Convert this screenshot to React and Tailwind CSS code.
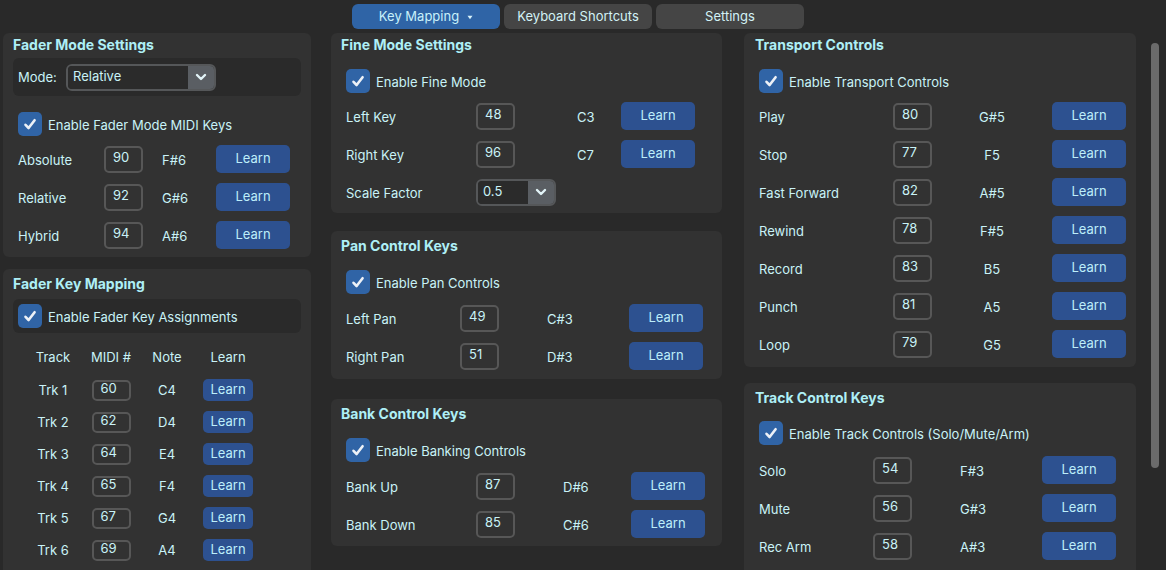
import React from "react";

const FONT = { fontFamily: "Inter, 'Noto Sans', sans-serif" };

function Check() {
  return (
    <span className="w-6 h-6 shrink-0 rounded-[5px] bg-[#3064a6] flex items-center justify-center">
      <svg width="16" height="16" viewBox="0 0 16 16">
        <path d="M3.5 8.8 L6.6 12 L12.6 4.2" stroke="#edf1f7" strokeWidth="2.6" fill="none" strokeLinecap="round" strokeLinejoin="round" />
      </svg>
    </span>
  );
}

function CheckRow({ text, className }) {
  return (
    <div className={"flex items-center gap-[6px] " + className}>
      <Check />
      <span className="text-[13px] text-[#c9f2f7] pt-[4px]">{text}</span>
    </div>
  );
}

function Input({ v }) {
  return (
    <div className="w-[39px] h-[27px] border-2 border-[#575757] rounded-[5px] pl-[7px] flex items-center text-[13px] text-[#c9f2f7] pb-[2px]">
      {v}
    </div>
  );
}

function Learn() {
  return (
    <div className="w-[74px] h-[28px] rounded-[5px] bg-[#2d5190] flex items-center justify-center text-[13px] text-[#bdeefa]">
      Learn
    </div>
  );
}

function Chevron() {
  return (
    <svg width="14" height="14" viewBox="0 0 14 14">
      <path d="M3 5 L7 9 L11 5" stroke="#e2f4f8" strokeWidth="2.4" fill="none" strokeLinecap="round" strokeLinejoin="round" />
    </svg>
  );
}

function Select({ value, w }) {
  return (
    <div className={"h-[27px] border-2 border-[#555759] rounded-[6px] flex overflow-hidden " + w}>
      <div className="flex-1 bg-[#2b2b2b] pl-[5px] flex items-center text-[13px] text-[#c9f2f7]">{value}</div>
      <div className="w-[26px] bg-[#5a5e63] flex items-center justify-center">
        <Chevron />
      </div>
    </div>
  );
}

function Row({ cols, noteCls, label, value, note }) {
  return (
    <div className={"grid items-center h-[28px] " + cols}>
      <span className="text-[13px] text-[#c9f2f7] pt-[4px]">{label}</span>
      <Input v={value} />
      <span className={"text-[13px] text-[#c9f2f7] pt-[4px] " + noteCls}>{note}</span>
      <Learn />
    </div>
  );
}

function Title({ children, className }) {
  return (
    <div className={"h-[24px] flex items-center pb-[2px] text-[14px] font-bold text-[#aeeff6] " + className}>
      {children}
    </div>
  );
}

const panel = "bg-[#323232] rounded-[6px] flex flex-col";

export default function App() {
  const faderRows = [
    ["Absolute", "90", "F#6"],
    ["Relative", "92", "G#6"],
    ["Hybrid", "94", "A#6"],
  ];
  const trk = [
    ["Trk 1", "60", "C4"],
    ["Trk 2", "62", "D4"],
    ["Trk 3", "64", "E4"],
    ["Trk 4", "65", "F4"],
    ["Trk 5", "67", "G4"],
    ["Trk 6", "69", "A4"],
  ];
  const transport = [
    ["Play", "80", "G#5"],
    ["Stop", "77", "F5"],
    ["Fast Forward", "82", "A#5"],
    ["Rewind", "78", "F#5"],
    ["Record", "83", "B5"],
    ["Punch", "81", "A5"],
    ["Loop", "79", "G5"],
  ];
  const trackCtl = [
    ["Solo", "54", "F#3"],
    ["Mute", "56", "G#3"],
    ["Rec Arm", "58", "A#3"],
  ];

  return (
    <div style={FONT} className="w-[1166px] h-[570px] overflow-hidden bg-[#292929] pt-[4px] flex flex-col gap-[4px]">
      {/* Tabs */}
      <div className="flex gap-[4px] pl-[352px]">
        <div className="w-[148px] h-[25px] rounded-[6px] bg-[#2f64a6] flex items-center justify-center gap-[8px] text-[13px] text-[#c8f1fa]">
          <span>Key Mapping</span>
          <svg width="6" height="5" viewBox="0 0 6 5" className="mt-[2px]">
            <path d="M0.5 0.8 L5.5 0.8 L3 4.2 Z" fill="#d8f2fa" />
          </svg>
        </div>
        <div className="w-[148px] h-[25px] rounded-[6px] bg-[#454545] flex items-center justify-center text-[13px] text-[#d2f2f6]">
          Keyboard Shortcuts
        </div>
        <div className="w-[148px] h-[25px] rounded-[6px] bg-[#454545] flex items-center justify-center text-[13px] text-[#d2f2f6]">
          Settings
        </div>
      </div>

      {/* Content */}
      <div className="flex pl-[3px]">
        {/* Left column */}
        <div className="w-[308px] flex flex-col gap-[12px]">
          <div className={panel + " pb-[8px]"}>
            <Title className="pl-[10px]">Fader Mode Settings</Title>
            <div className="mx-[10px] mt-[1px] h-[38px] rounded-[6px] bg-[#2a2a2a] flex items-center pl-[5px]">
              <span className="w-[48px] text-[13px] text-[#c9f2f7] pt-[2px]">Mode:</span>
              <Select value="Relative" w="w-[150px]" />
            </div>
            <CheckRow text="Enable Fader Mode MIDI Keys" className="pl-[15px] mt-[16px]" />
            <div className="pl-[15px] mt-[9px] flex flex-col gap-[10px]">
              {faderRows.map(([l, v, n]) => (
                <Row key={l} cols="grid-cols-[86px_39px_73px_74px]" noteCls="pl-[19px]" label={l} value={v} note={n} />
              ))}
            </div>
          </div>

          <div className={panel + " pt-[3px] h-[320px]"}>
            <Title className="pl-[10px]">Fader Key Mapping</Title>
            <div className="mx-[10px] mt-[3px] h-[34px] rounded-[6px] bg-[#2a2a2a] flex items-center pl-[5px]">
              <CheckRow text="Enable Fader Key Assignments" className="" />
            </div>
            <div className="ml-[20px] mt-[15px] grid grid-cols-[60px_56px_56px_66px] h-[20px] items-center text-center text-[13px] text-[#c9f2f7]">
              <span>Track</span>
              <span>MIDI #</span>
              <span>Note</span>
              <span>Learn</span>
            </div>
            <div className="ml-[20px] mt-[10px] flex flex-col gap-[8px]">
              {trk.map(([l, v, n]) => (
                <div key={l} className="grid grid-cols-[60px_56px_56px_66px] h-[24px] items-center text-center text-[13px] text-[#c9f2f7]">
                  <span className="pt-[2px]">{l}</span>
                  <div className="flex justify-center">
                    <div className="w-[39px] h-[21px] border-2 border-[#575757] rounded-[5px] pl-[7px] flex items-center text-left pb-[2px]">{v}</div>
                  </div>
                  <span className="pt-[2px]">{n}</span>
                  <div className="flex justify-center">
                    <div className="w-[50px] h-[22px] rounded-[5px] bg-[#2d5190] flex items-center justify-center text-[#bdeefa]">Learn</div>
                  </div>
                </div>
              ))}
            </div>
          </div>
        </div>

        {/* Middle column */}
        <div className="w-[391px] ml-[20px] flex flex-col">
          <div className={panel + " pb-[7px]"}>
            <Title className="pl-[10px]">Fine Mode Settings</Title>
            <CheckRow text="Enable Fine Mode" className="pl-[15px] mt-[12px]" />
            <div className="pl-[15px] mt-[9px] flex flex-col gap-[10px]">
              <Row cols="grid-cols-[130px_39px_106px_74px]" noteCls="pl-[62px]" label="Left Key" value="48" note="C3" />
              <Row cols="grid-cols-[130px_39px_106px_74px]" noteCls="pl-[62px]" label="Right Key" value="96" note="C7" />
              <div className="flex items-center h-[28px]">
                <span className="w-[130px] text-[13px] text-[#c9f2f7] pt-[4px]">Scale Factor</span>
                <Select value="0.5" w="w-[80px]" />
              </div>
            </div>
          </div>

          <div className={panel + " mt-[18px] pt-[3px] pb-[9px]"}>
            <Title className="pl-[10px]">Pan Control Keys</Title>
            <CheckRow text="Enable Pan Controls" className="pl-[15px] mt-[12px]" />
            <div className="pl-[15px] mt-[10px] flex flex-col gap-[10px]">
              <Row cols="grid-cols-[114px_39px_130px_74px]" noteCls="pl-[48px]" label="Left Pan" value="49" note="C#3" />
              <Row cols="grid-cols-[114px_39px_130px_74px]" noteCls="pl-[48px]" label="Right Pan" value="51" note="D#3" />
            </div>
          </div>

          <div className={panel + " mt-[20px] pt-[3px] pb-[8px]"}>
            <Title className="pl-[10px]">Bank Control Keys</Title>
            <CheckRow text="Enable Banking Controls" className="pl-[15px] mt-[12px]" />
            <div className="pl-[15px] mt-[10px] flex flex-col gap-[10px]">
              <Row cols="grid-cols-[130px_39px_116px_74px]" noteCls="pl-[48px]" label="Bank Up" value="87" note="D#6" />
              <Row cols="grid-cols-[130px_39px_116px_74px]" noteCls="pl-[48px]" label="Bank Down" value="85" note="C#6" />
            </div>
          </div>
        </div>

        {/* Right column */}
        <div className="w-[392px] ml-[22px] flex flex-col">
          <div className={panel + " pb-[9px]"}>
            <Title className="pl-[11px]">Transport Controls</Title>
            <CheckRow text="Enable Transport Controls" className="pl-[15px] mt-[12px]" />
            <div className="pl-[15px] mt-[9px] flex flex-col gap-[10px]">
              {transport.map(([l, v, n]) => (
                <Row key={l} cols="grid-cols-[134px_39px_120px_74px]" noteCls="text-center" label={l} value={v} note={n} />
              ))}
            </div>
          </div>

          <div className={panel + " mt-[16px] pt-[3px] h-[200px]"}>
            <Title className="pl-[11px]">Track Control Keys</Title>
            <CheckRow text="Enable Track Controls (Solo/Mute/Arm)" className="pl-[15px] mt-[11px]" />
            <div className="pl-[15px] mt-[11px] flex flex-col gap-[10px]">
              {trackCtl.map(([l, v, n]) => (
                <Row key={l} cols="grid-cols-[114px_39px_130px_74px]" noteCls="pl-[48px]" label={l} value={v} note={n} />
              ))}
            </div>
          </div>
        </div>

        {/* Scrollbar */}
        <div className="ml-[15px] mt-[10px] w-[8px] h-[425px] rounded-full bg-[#6b6b6b]" />
      </div>
    </div>
  );
}
